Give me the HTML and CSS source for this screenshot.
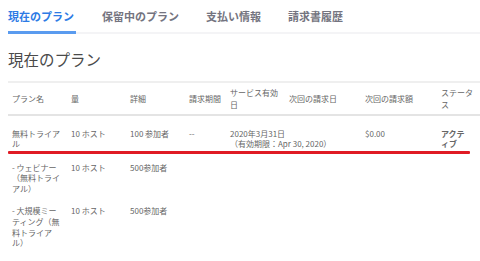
FILE: index.html
```html
<!DOCTYPE html>
<html lang="ja">
<head>
<meta charset="utf-8">
<link rel="stylesheet" href="styles.css">
</head>
<body>
<div class="page">
  <nav class="tabs">
    <span class="tab active">現在のプラン</span>
    <span class="tab">保留中のプラン</span>
    <span class="tab">支払い情報</span>
    <span class="tab">請求書履歴</span>
  </nav>
  <h1 class="title">現在のプラン</h1>
  <div class="table-wrap">
    <table class="plans">
      <colgroup>
        <col class="c59"><col class="c59"><col class="c59"><col class="c41"><col class="c59"><col class="c76"><col class="c76"><col class="c43">
      </colgroup>
      <thead>
        <tr>
          <th>プラン名</th>
          <th>量</th>
          <th>詳細</th>
          <th>請求期間</th>
          <th>サービス有効日</th>
          <th>次回の請求日</th>
          <th>次回の請求額</th>
          <th>ステータス</th>
        </tr>
      </thead>
      <tbody>
        <tr class="first">
          <td>無料トライアル</td>
          <td>10 ホスト</td>
          <td>100 参加者</td>
          <td>--</td>
          <td class="nowrap">2020年3月31日<br>（有効期限：Apr 30, 2020）</td>
          <td></td>
          <td>$0.00</td>
          <td class="status">アクテ<br>ィブ</td>
        </tr>
        <tr>
          <td>- ウェビナー（無料トライアル）</td>
          <td>10 ホスト</td>
          <td>500参加者</td>
          <td></td><td></td><td></td><td></td><td></td>
        </tr>
        <tr>
          <td>- 大規模ミーティング（無料トライアル）</td>
          <td>10 ホスト</td>
          <td>500参加者</td>
          <td></td><td></td><td></td><td></td><td></td>
        </tr>
      </tbody>
    </table>
    <div class="mark"></div>
  </div>
</div>
</body>
</html>
```

FILE: styles.css
```css
html, body {
  margin: 0;
  padding: 0;
  background: #fff;
}
body {
  font-family: "Noto Sans CJK JP", "Noto Sans", sans-serif;
  color: #555;
}
.page {
  padding-left: 8px;
}
.tabs {
  display: flex;
  gap: 26px;
  border-bottom: 2px solid #f4f4f6;
  padding-top: 9px;
}
.tab {
  font-size: 11px;
  line-height: 14px;
  font-weight: 700;
  color: #747480;
  padding: 0 1px 8px 0;
  margin-bottom: -2px;
  border-bottom: 3px solid transparent;
}
.tab.active {
  color: #2d7be5;
  border-bottom-color: #5a9bef;
  padding-right: 2px;
}
.title {
  font-size: 15.5px;
  line-height: 20px;
  font-weight: 400;
  color: #4a4a4a;
  margin: 15px 0 12px;
}
.table-wrap {
  position: relative;
}
.plans {
  width: 472px;
  table-layout: fixed;
  border-collapse: collapse;
  font-size: 8px;
}
.c59 { width: 59px; }
.c41 { width: 41px; }
.c76 { width: 76px; }
.c43 { width: 43px; }
.plans th {
  text-align: left;
  font-weight: 400;
  color: #666;
  line-height: 12px;
  padding: 3.5px 4px;
  vertical-align: middle;
  border-top: 2px solid #efefef;
  border-bottom: 2px solid #e4e4e4;
}
.plans td {
  vertical-align: top;
  line-height: 10.6px;
  padding: 6px 4px;
  color: #666;
}
.plans tr.first td {
  padding-top: 12.5px;
  padding-bottom: 7px;
}
.nowrap {
  white-space: nowrap;
}
.status {
  color: #3a3a3a;
  font-weight: 700;
}
.mark {
  position: absolute;
  left: 0;
  top: 69.5px;
  width: 462px;
  height: 3px;
  background: #e01b24;
  border-radius: 1px;
}
```
